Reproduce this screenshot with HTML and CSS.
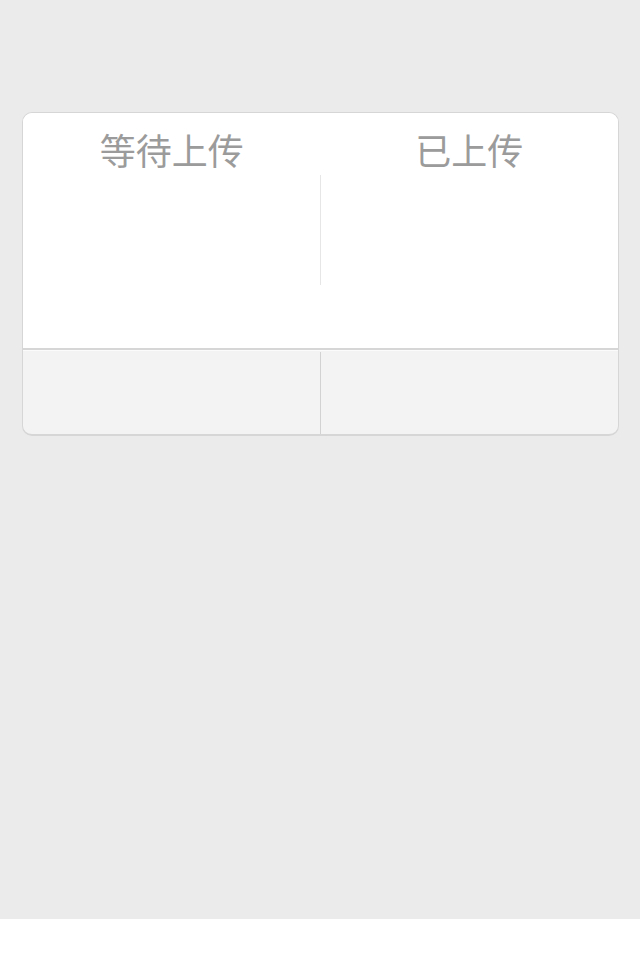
FILE: index.html
```html
<!DOCTYPE html>
<html lang="zh">
<head>
<meta charset="utf-8">
<title>上传</title>
<link rel="stylesheet" href="styles.css">
</head>
<body>
<div class="page">
  <div class="card">
    <div class="top">
      <div class="heads">
        <div class="head">等待上传</div>
        <div class="head">已上传</div>
      </div>
      <div class="panes">
        <div class="pane pane-left"></div>
        <div class="pane"></div>
      </div>
    </div>
    <div class="bottom">
      <div class="cell cell-left"></div>
      <div class="cell"></div>
    </div>
  </div>
</div>
</body>
</html>
```
FILE: styles.css
```css
html, body {
  margin: 0;
  padding: 0;
  background: #ffffff;
}
body {
  font-family: "Noto Sans CJK SC", "Noto Sans", sans-serif;
}
.page {
  background: #ebebeb;
  height: 919px;
  box-sizing: border-box;
  padding: 112px 21px 0 22px;
}
.card {
  border: 1px solid #d6d6d6;
  border-bottom-width: 2px;
  border-radius: 10px;
  overflow: hidden;
  background: #f3f3f3;
}
.top {
  background: #ffffff;
  height: 235px;
  border-bottom: 2px solid #d6d6d6;
}
.heads {
  display: flex;
  padding-top: 18px;
  height: 44px;
}
.head {
  flex: 1;
  text-align: center;
  font-size: 36px;
  line-height: 36px;
  color: #9b9b9b;
}
.panes {
  display: flex;
  height: 110px;
}
.pane {
  flex: 1;
}
.pane-left {
  border-right: 1px solid #e6e6e6;
}
.bottom {
  display: flex;
  height: 82px;
  border-top: 1px solid #fbfbfb;
  padding-top: 1px;
}
.cell {
  flex: 1;
}
.cell-left {
  border-right: 1px solid #d2d2d2;
}
```
